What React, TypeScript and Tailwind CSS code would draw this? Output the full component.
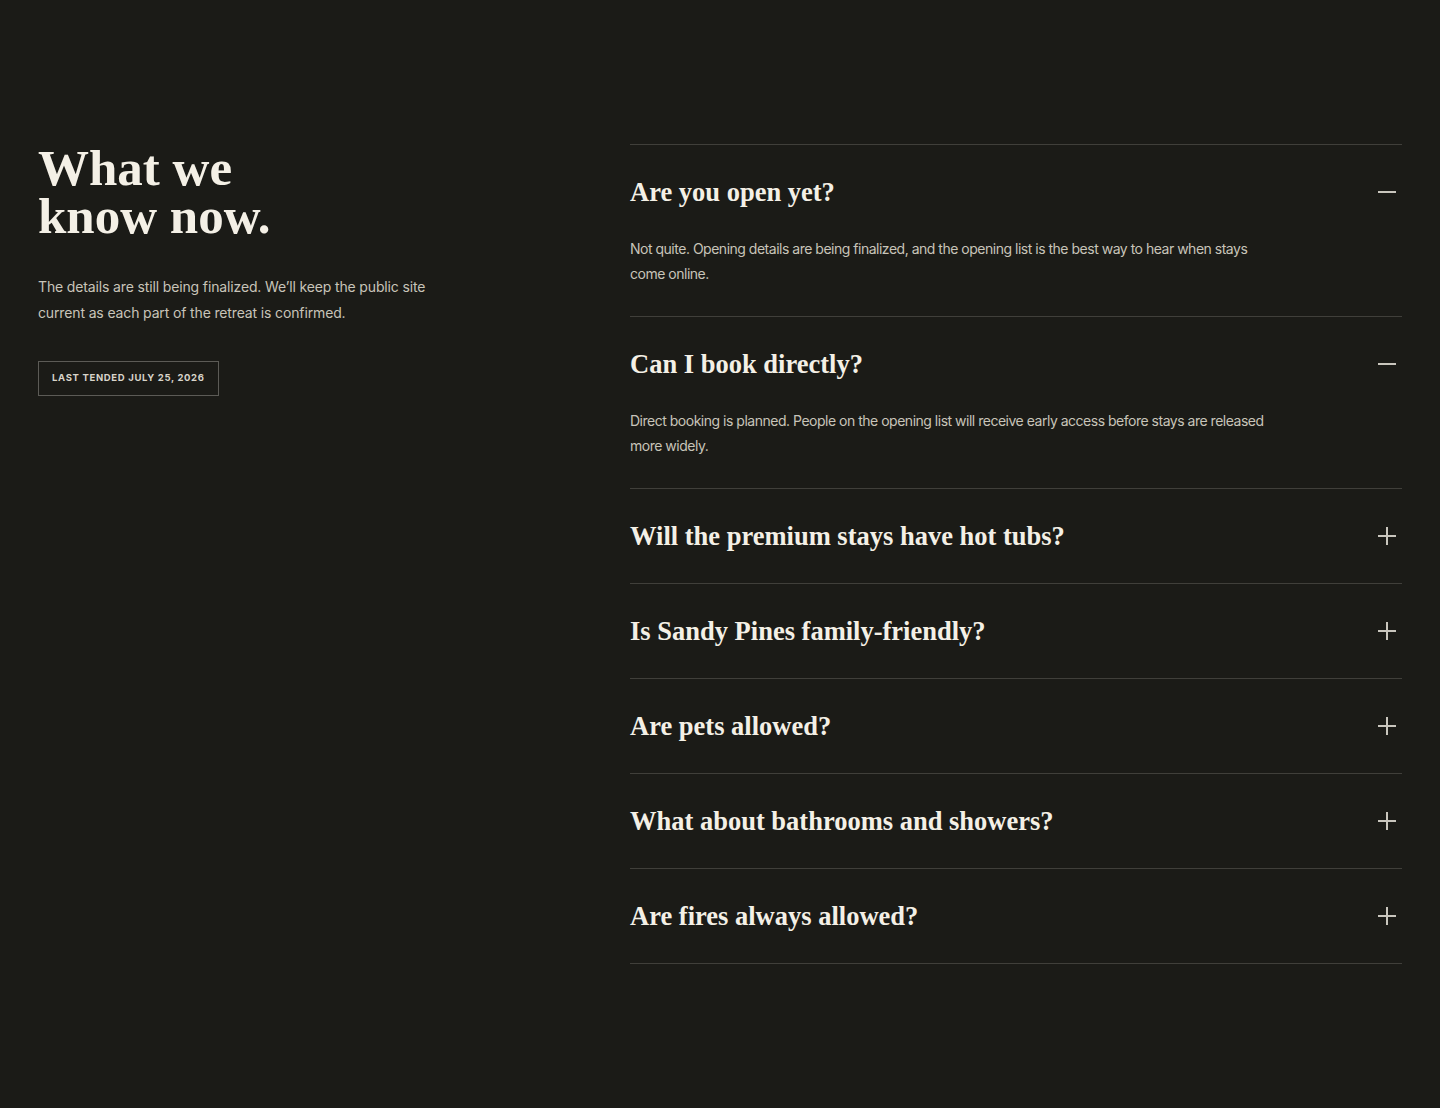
import React, { useState } from "react";

const faqs = [
  {
    q: "Are you open yet?",
    a: "Not quite. Opening details are being finalized, and the opening list is the best way to hear when stays come online.",
  },
  {
    q: "Can I book directly?",
    a: "Direct booking is planned. People on the opening list will receive early access before stays are released more widely.",
  },
  {
    q: "Will the premium stays have hot tubs?",
    a: "Premium stay amenities are still being confirmed. We'll share details as soon as they are final.",
  },
  {
    q: "Is Sandy Pines family-friendly?",
    a: "Yes. The retreat is being designed with families and small groups in mind.",
  },
  {
    q: "Are pets allowed?",
    a: "Pet policies are still being finalized and will be posted before stays open.",
  },
  {
    q: "What about bathrooms and showers?",
    a: "Bathroom and shower facilities are part of the plan. More details will follow as they are confirmed.",
  },
  {
    q: "Are fires always allowed?",
    a: "Fires depend on seasonal conditions and local restrictions. Always check current guidance during your stay.",
  },
];

const serif = { fontFamily: '"Liberation Serif", "DejaVu Serif", serif' };

function Icon({ open }: { open: boolean }) {
  return (
    <span className="relative block h-[18px] w-[18px] shrink-0 mr-[6px]">
      <span className="absolute left-0 top-[8px] h-[1.5px] w-[18px] bg-[#c9c6bd]" />
      {!open && (
        <span className="absolute left-[8px] top-0 h-[18px] w-[1.5px] bg-[#c9c6bd]" />
      )}
    </span>
  );
}

export default function App() {
  const [open, setOpen] = useState<boolean[]>([true, true, false, false, false, false, false]);
  return (
    <div
      className="min-h-screen w-full bg-[#1b1b17] text-[#f4f0e6]"
      style={{ fontFamily: '"Inter", "Liberation Sans", sans-serif' }}
    >
      <div className="flex px-[38px] pt-[144px] pb-[145px]">
        <div className="w-[592px] shrink-0">
          <h2
            className="text-[51px] leading-[48px] font-bold text-[#f4f0e6]"
            style={serif}
          >
            What we
            <br />
            know now.
          </h2>
          <p className="mt-[34px] max-w-[400px] text-[14px] leading-[26px] tracking-[-0.01em] text-[#c8c4b9]">
            The details are still being finalized. We’ll keep the public site current as each part of the retreat is confirmed.
          </p>
          <div className="mt-[35px] inline-flex h-[35px] items-center border border-[#5c5b56] px-[13px] text-[9.5px] font-bold uppercase tracking-[0.07em] text-[#d8d4ca]">
            Last tended July 25, 2026
          </div>
        </div>
        <div className="flex-1 border-t border-[#403f3a]">
          {faqs.map((f, i) => (
            <div key={f.q} className="border-b border-[#403f3a]">
              <button
                type="button"
                onClick={() => setOpen((o) => o.map((v, j) => (j === i ? !v : v)))}
                className="flex w-full items-center justify-between py-[32px] text-left"
              >
                <span className="text-[26.5px] leading-[30px] font-bold text-[#f4f0e6]" style={serif}>
                  {f.q}
                </span>
                <Icon open={open[i]} />
              </button>
              {open[i] && (
                <p className="-mt-[2px] pb-[30px] max-w-[650px] text-[14px] leading-[24.5px] tracking-[-0.035em] text-[#c8c4b9]">
                  {f.a}
                </p>
              )}
            </div>
          ))}
        </div>
      </div>
    </div>
  );
}
